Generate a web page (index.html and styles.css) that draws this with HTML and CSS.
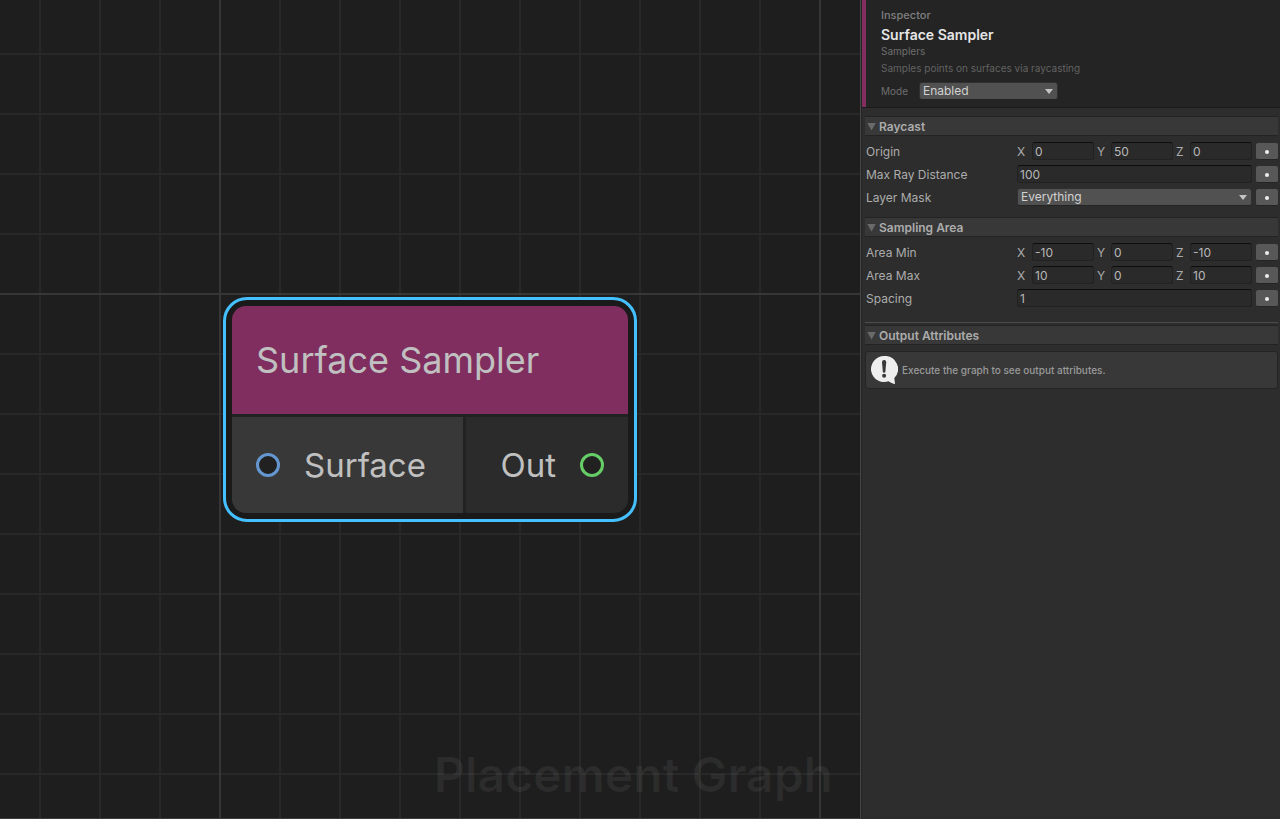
FILE: index.html
```
<!DOCTYPE html>
<html lang="en">
<head>
    <meta charset="UTF-8">
    <meta name="viewport" content="width=device-width, initial-scale=1.0">
    <title>Placement Graph</title>
    <link rel="stylesheet" href="styles.css">
</head>
<body>
    <main class="graph">
        <!-- Selected node on the canvas -->
        <section class="node">
            <h2 class="node-title">Surface Sampler</h2>
            <div class="node-ports">
                <div class="port port-in">
                    <span class="dot dot-blue"></span>
                    <span>Surface</span>
                </div>
                <div class="port port-out">
                    <span>Out</span>
                    <span class="dot dot-green"></span>
                </div>
            </div>
        </section>
        <div class="watermark">Placement Graph</div>
    </main>

    <aside class="inspector">
        <header class="inspector-header">
            <div class="kicker">Inspector</div>
            <h1>Surface Sampler</h1>
            <p class="category">Samplers</p>
            <p class="description">Samples points on surfaces via raycasting</p>
            <div class="mode">
                <label for="mode">Mode</label>
                <div class="dropdown">
                    <select id="mode">
                        <option>Enabled</option>
                        <option>Disabled</option>
                    </select>
                </div>
            </div>
        </header>

        <details class="group" open>
            <summary>Raycast</summary>
            <div class="rows">
                <div class="row">
                    <span class="name">Origin</span>
                    <div class="vector">
                        <label for="originX">X</label><input type="text" id="originX" value="0">
                        <label for="originY">Y</label><input type="text" id="originY" value="50">
                        <label for="originZ">Z</label><input type="text" id="originZ" value="0">
                    </div>
                    <button type="button" class="more" aria-label="Origin options"></button>
                </div>
                <div class="row">
                    <label class="name" for="maxDistance">Max Ray Distance</label>
                    <input type="text" id="maxDistance" value="100">
                    <button type="button" class="more" aria-label="Max Ray Distance options"></button>
                </div>
                <div class="row">
                    <label class="name" for="layerMask">Layer Mask</label>
                    <div class="dropdown">
                        <select id="layerMask">
                            <option>Everything</option>
                            <option>Nothing</option>
                        </select>
                    </div>
                    <button type="button" class="more" aria-label="Layer Mask options"></button>
                </div>
            </div>
        </details>

        <details class="group" open>
            <summary>Sampling Area</summary>
            <div class="rows">
                <div class="row">
                    <span class="name">Area Min</span>
                    <div class="vector">
                        <label for="minX">X</label><input type="text" id="minX" value="-10">
                        <label for="minY">Y</label><input type="text" id="minY" value="0">
                        <label for="minZ">Z</label><input type="text" id="minZ" value="-10">
                    </div>
                    <button type="button" class="more" aria-label="Area Min options"></button>
                </div>
                <div class="row">
                    <span class="name">Area Max</span>
                    <div class="vector">
                        <label for="maxX">X</label><input type="text" id="maxX" value="10">
                        <label for="maxY">Y</label><input type="text" id="maxY" value="0">
                        <label for="maxZ">Z</label><input type="text" id="maxZ" value="10">
                    </div>
                    <button type="button" class="more" aria-label="Area Max options"></button>
                </div>
                <div class="row">
                    <label class="name" for="spacing">Spacing</label>
                    <input type="text" id="spacing" value="1">
                    <button type="button" class="more" aria-label="Spacing options"></button>
                </div>
            </div>
        </details>

        <details class="group output" open>
            <summary>Output Attributes</summary>
            <div class="help-box">
                <svg class="help-icon" width="28" height="28" viewBox="0 0 28 28" aria-hidden="true">
                    <path fill="#eeeeee" d="M14 0a13 13 0 1 0 4.500 25.200C20.500 26.500 23 27.600 25 28L24.300 22A13 13 0 0 0 14 0z"/>
                    <path fill="#383838" d="M12 6.200a2.100 2.100 0 0 1 4.200 0L15.300 16.500h-2.400z"/>
                    <circle fill="#383838" cx="14.100" cy="19.800" r="2"/>
                </svg>
                <p>Execute the graph to see output attributes.</p>
            </div>
        </details>
    </aside>
</body>
</html>
```

FILE: styles.css
```
* {
    box-sizing: border-box;
}

body {
    margin: 0;
    min-height: 100vh;
    display: flex;
    background-color: #2d2d2d;
    color: #acacac;
    font-family: Inter, sans-serif;
    font-size: 12px;
    line-height: 16px;
}

h1, h2, p {
    margin: 0;
}

/* Graph canvas */
.graph {
    position: relative;
    flex: 1;
    overflow: hidden;
    border-right: 1px solid #464646;
    border-bottom: 1px solid #3a3a3a;
    background-color: #1e1e1e;
    background-image:
        linear-gradient(90deg, #363636 2px, transparent 2px),
        linear-gradient(#363636 2px, transparent 2px),
        linear-gradient(90deg, #282828 2px, transparent 2px),
        linear-gradient(#282828 2px, transparent 2px);
    background-size: 600px 600px, 600px 600px, 60px 60px, 60px 60px;
    background-position: 219px 293px, 219px 293px, 39px 53px, 39px 53px;
}

.node {
    position: absolute;
    left: 223px;
    top: 297px;
    padding: 6px;
    border: 3px solid #44c0ff;
    border-radius: 24px;
    background-color: #1a1a1a;
    color: #c0c0c0;
}

.node-title {
    padding: 32px 24px;
    border-radius: 14px 14px 0 0;
    background-color: #7f2e5f;
    font-size: 36px;
    line-height: 44px;
    font-weight: 400;
}

.node-ports {
    display: flex;
    gap: 3px;
    border-top: 3px solid #222222;
    border-radius: 0 0 14px 14px;
    overflow: hidden;
    background-color: #222222;
}

.port {
    display: flex;
    align-items: center;
    gap: 24px;
    height: 96px;
    padding: 0 24px;
    font-size: 33px;
}

.port-in {
    width: 231px;
    background-color: #383838;
}

.port-out {
    width: 162px;
    justify-content: flex-end;
    background-color: #2b2b2b;
}

.dot {
    width: 24px;
    height: 24px;
    border: 3px solid;
    border-radius: 50%;
    background-color: #212121;
}

.dot-blue {
    border-color: #6496cf;
}

.dot-green {
    border-color: #66cc66;
}

.watermark {
    position: absolute;
    right: 27px;
    bottom: 14px;
    color: rgba(255, 255, 255, 0.06);
    font-size: 48px;
    line-height: 58px;
    font-weight: 600;
}

/* Inspector panel */
.inspector {
    width: 419px;
    border-left: 1px solid #252525;
}

.inspector-header {
    height: 107px;
    margin-bottom: 1px;
    padding: 7px 15px 0;
    border-left: 4px solid #7f2e5f;
    background-color: #242424;
    box-shadow: 0 1px #1a1a1a;
}

.kicker {
    color: #7f7f7f;
    font-size: 11px;
    font-weight: 500;
}

h1 {
    margin-top: 2px;
    color: #e6e6e6;
    font-size: 14px;
    line-height: 19px;
    font-weight: 600;
}

.category,
.description,
.mode label {
    color: #6e6e6e;
    font-size: 10px;
    line-height: 14px;
}

.description {
    margin-top: 3px;
    color: #626262;
}

.mode {
    display: flex;
    align-items: center;
    gap: 11px;
    margin-top: 7px;
}

.mode .dropdown {
    width: 139px;
}

/* Form controls */
input,
select {
    width: 100%;
    min-width: 0;
    height: 18px;
    margin: 0;
    padding: 0 2px;
    border: 1px solid #212121;
    border-top-color: #0d0d0d;
    border-radius: 3px;
    background-color: #2a2a2a;
    color: #b8b8b8;
    font: inherit;
}

select {
    appearance: none;
    grid-area: 1 / 1;
    padding: 0 3px;
    border-color: #303030;
    border-bottom-color: #242424;
    background-color: #515151;
    color: #d2d2d2;
}

.dropdown {
    display: grid;
    align-items: center;
}

.dropdown::after {
    content: "";
    grid-area: 1 / 1;
    justify-self: end;
    margin-right: 5px;
    border: 4px solid transparent;
    border-top: 5px solid #c4c4c4;
    border-bottom: 0;
    pointer-events: none;
}

.more {
    display: grid;
    place-items: center;
    width: 22px;
    height: 17px;
    margin: 1px 0 0;
    padding: 1px 0 0;
    border: 0;
    border-bottom: 1px solid #242424;
    border-radius: 2px;
    background-color: #585858;
}

.more::after {
    content: "";
    width: 4px;
    height: 4px;
    border-radius: 50%;
    background-color: #eeeeee;
}

/* Foldout groups */
.group {
    margin: 0 2px 0 3px;
    padding-top: 8px;
}

summary {
    display: flex;
    align-items: center;
    gap: 3px;
    height: 20px;
    padding: 1px 2px 0;
    border: 1px solid #232323;
    border-width: 1px 0;
    background-color: #383838;
    font-weight: 600;
}

summary::before {
    content: "";
    width: 9px;
    height: 8px;
    background-color: #6a6a6a;
    clip-path: polygon(0 0, 100% 0, 50% 100%);
}

.rows {
    display: grid;
    gap: 5px;
    padding: 6px 0 3px 1px;
}

.row {
    display: grid;
    grid-template-columns: 147px 1fr 22px;
    align-items: center;
    column-gap: 4px;
}

.name {
    padding-top: 1px;
}

.vector {
    display: grid;
    grid-template-columns: 12px 1fr 11px 1fr 11px 1fr;
    column-gap: 3px;
}

.vector label {
    padding-top: 2px;
}

.output {
    margin-top: 12px;
    padding-top: 2px;
    border-top: 1px solid #4c4c4c;
}

.help-box {
    display: flex;
    align-items: center;
    gap: 4px;
    height: 38px;
    margin-top: 6px;
    padding-left: 4px;
    border: 1px solid #242424;
    border-radius: 3px;
    background-color: #383838;
    color: #9a9a9a;
    font-size: 10px;
    font-weight: 500;
}
```
